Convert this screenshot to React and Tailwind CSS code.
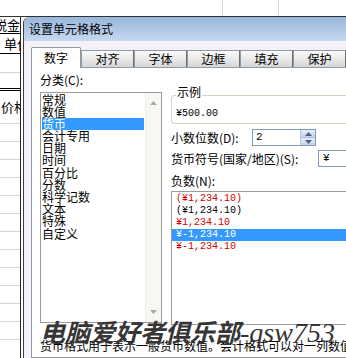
const cats = ["常规", "数值", "货币", "会计专用", "日期", "时间", "百分比", "分数", "科学记数", "文本", "特殊", "自定义"];
const negs = [
  { t: "(¥1,234.10)", red: true },
  { t: "(¥1,234.10)" },
  { t: "¥1,234.10", red: true },
  { t: "¥-1,234.10", sel: true },
  { t: "¥-1,234.10", red: true },
];
const tabs = ["对齐", "字体", "边框", "填充", "保护"];

const Tri = ({ down }) => (
  <svg width="7" height="4" viewBox="0 0 7 4">
    <path d={down ? "M0 0h7L3.5 4z" : "M0 4h7L3.5 0z"} fill="#a8a8a8" />
  </svg>
);

const Sheet = () => (
  <div className="w-[21px] shrink-0 border-r border-[#222] flex flex-col">
    <div className="h-[17px] border-b border-black flex justify-end overflow-hidden whitespace-nowrap text-[13px] leading-[16px]">
      税金
    </div>
    <div className="h-[20px] border-b border-black pl-[4px] overflow-hidden whitespace-nowrap text-[13px] leading-[20px]">
      单位
    </div>
    <div className="h-[19px] border-b border-[#d4d4d4]" />
    <div className="h-[18px] border-b-[3px] border-double border-black" />
    <div className="h-[33px] border-b border-[#d4d4d4] pl-[1px] flex items-center overflow-hidden whitespace-nowrap text-[13px]">
      价格
    </div>
    {Array.from({ length: 12 }).map((_, i) => (
      <div key={i} className="h-[18px] shrink-0 border-b border-[#d4d4d4]" />
    ))}
  </div>
);

export default function App() {
  return (
    <div className="w-[346px] h-[358px] overflow-hidden bg-white relative text-black text-[12px] font-['Noto_Sans_CJK_SC',sans-serif]">
      <div className="flex h-[17px] border-b border-[#333]">
        <div className="w-[222px]" />
        <div className="w-[56px] border-l border-[#d4d4d4]" />
        <div className="flex-1 border-l border-[#d4d4d4]" />
      </div>

      <div className="flex h-[341px]">
        <Sheet />

        <div className="flex-1 ml-[2px] border-l border-[#3d3d3d] rounded-tl-[6px] overflow-hidden flex flex-col bg-[#f4f2f8]">
          <div className="h-[24px] shrink-0 bg-linear-to-b from-[#9ab6dc] to-[#c6d9f0] flex items-center pl-[5px] text-[12px]">
            设置单元格格式
          </div>

          <div className="flex-1 flex flex-col pt-[6px] pl-[7px]">
            <div className="flex items-end h-[20px]">
              <div className="w-[55px] h-[21px] -mb-[1px] relative z-10 bg-white border border-b-0 border-[#8c9ba6] rounded-t-[2px] flex items-center justify-center">
                数字
              </div>
              {tabs.map((t) => (
                <div
                  key={t}
                  className="w-[53px] h-[17px] shrink-0 bg-linear-to-b from-[#fbfbfb] to-[#d6d6d6] border border-b-0 border-[#8c9ba6] border-r-[#6f6f6f] flex items-center justify-center"
                >
                  {t}
                </div>
              ))}
            </div>

            <div className="flex-1 bg-white border border-r-0 border-[#8c9ba6] pl-[8px] flex flex-col">
              <div className="flex gap-[9px]">
                <div className="w-[122px] shrink-0 flex flex-col">
                  <div className="h-[24px] flex items-center">分类(C):</div>
                  <div className="h-[231px] border border-[#9a9a9a] flex">
                    <div className="flex-1 px-[1px] pt-[0.5px] flex flex-col">
                      {cats.map((c) => (
                        <div
                          key={c}
                          className={
                            "h-[12.2px] leading-[12.2px] whitespace-nowrap " +
                            (c === "货币" ? "bg-[#3399ff] text-white" : "")
                          }
                        >
                          {c}
                        </div>
                      ))}
                    </div>
                    <div className="w-[16px] bg-[#f7f7f4] border-l border-[#efefea] flex flex-col items-center justify-between py-[8px]">
                      <Tri />
                      <Tri down />
                    </div>
                  </div>
                </div>

                <div className="flex-1 flex flex-col pt-[27px]">
                  <div className="h-[29px] border border-r-0 border-[#d5d2c2] rounded-l-[4px] pl-[4px] flex flex-col">
                    <div className="-mt-[12px] w-fit bg-white px-[1px] leading-[16px]">示例</div>
                    <div className="mt-[7px] leading-[14px] text-[10px] font-['Liberation_Mono',monospace]">
                      ¥500.00
                    </div>
                  </div>

                  <div className="mt-[5px] h-[17px] flex items-center">
                    <div className="w-[81px] shrink-0">小数位数(D):</div>
                    <div className="w-[64px] h-[17px] border border-[#7f9db9] flex">
                      <div className="flex-1 pl-[3px] leading-[15px] text-[11px] font-['Liberation_Mono',monospace]">2</div>
                      <div className="w-[15px] flex flex-col border-l border-[#b9c7dc]">
                        <div className="flex-1 bg-linear-to-b from-[#e7eef9] to-[#c4d3ec] border-b border-[#aebdd6] flex items-center justify-center">
                          <svg width="7" height="4" viewBox="0 0 7 4">
                            <path d="M0 4h7L3.5 0z" fill="#4d6185" />
                          </svg>
                        </div>
                        <div className="flex-1 bg-linear-to-b from-[#e7eef9] to-[#c4d3ec] flex items-center justify-center">
                          <svg width="7" height="4" viewBox="0 0 7 4">
                            <path d="M0 0h7L3.5 4z" fill="#4d6185" />
                          </svg>
                        </div>
                      </div>
                    </div>
                  </div>

                  <div className="mt-[4px] h-[17px] flex items-center">
                    <div className="w-[147px] shrink-0 whitespace-nowrap">货币符号(国家/地区)(S):</div>
                    <div className="flex-1 h-[17px] border border-r-0 border-[#7f9db9] pl-[4px] leading-[15px] text-[11px] font-['Liberation_Mono',monospace]">
                      ¥
                    </div>
                  </div>

                  <div className="mt-[3px] h-[21px] flex items-center">负数(N):</div>

                  <div className="h-[134px] border border-r-0 border-[#9a9a9a] pt-[1px] flex flex-col text-[10px] font-['Liberation_Mono',monospace]">
                    {negs.map((n, i) => (
                      <div
                        key={i}
                        className={
                          "h-[12px] leading-[12px] pl-[4px] whitespace-nowrap " +
                          (n.sel ? "bg-[#3399ff] text-white" : n.red ? "text-[#d40000]" : "text-black")
                        }
                      >
                        {n.t}
                      </div>
                    ))}
                  </div>
                </div>
              </div>

              <div className="mt-[12px] leading-[18px] whitespace-nowrap overflow-hidden">
                货币格式用于表示一般货币数值。会计格式可以对一列数值进行小数点对齐。
              </div>
            </div>
          </div>
        </div>
      </div>

      <div className="absolute left-[40px] top-[316px] flex items-baseline whitespace-nowrap text-[#363636] pointer-events-none">
        <span className="text-[25px] leading-[30px] font-bold italic">电脑爱好者俱乐部</span>
        <span className="text-[28px] leading-[30px] italic font-['Liberation_Serif',serif]">-qsw753</span>
      </div>
    </div>
  );
}
